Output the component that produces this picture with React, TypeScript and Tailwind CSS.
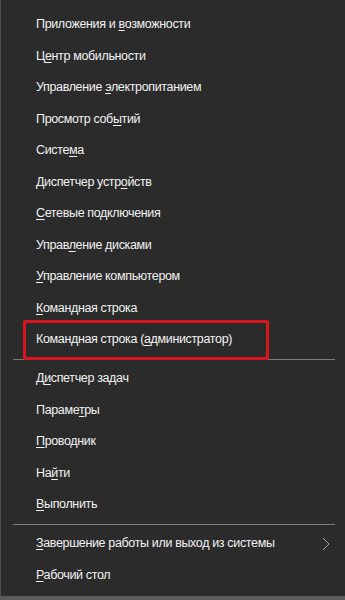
import type { ReactNode } from "react";

type Item = { pre: string; key: string; post: string };

const groupA: Item[] = [
  { pre: "Приложения и ", key: "в", post: "озможности" },
  { pre: "Ц", key: "е", post: "нтр мобильности" },
  { pre: "Управление ", key: "э", post: "лектропитанием" },
  { pre: "Просмотр соб", key: "ы", post: "тий" },
  { pre: "Систе", key: "м", post: "а" },
  { pre: "Диспетчер устр", key: "о", post: "йств" },
  { pre: "", key: "С", post: "етевые подключения" },
  { pre: "Управ", key: "л", post: "ение дисками" },
  { pre: "", key: "У", post: "правление компьютером" },
  { pre: "", key: "К", post: "омандная строка" },
];

const groupB: Item[] = [
  { pre: "Д", key: "и", post: "спетчер задач" },
  { pre: "Параме", key: "т", post: "ры" },
  { pre: "", key: "П", post: "роводник" },
  { pre: "На", key: "й", post: "ти" },
  { pre: "", key: "В", post: "ыполнить" },
];

function Label({ item }: { item: Item }) {
  return (
    <span>
      {item.pre}
      <span className="underline decoration-1 underline-offset-[2px]">{item.key}</span>
      {item.post}
    </span>
  );
}

function Row({ children }: { children: ReactNode }) {
  return (
    <div className="relative flex h-[31.5px] items-center pl-[35px] pr-[10px]">
      {children}
    </div>
  );
}

function Separator() {
  return (
    <div className="flex h-[7.5px] items-center pl-[12px] pr-[10px]">
      <div className="h-px w-full bg-[#7a7a7a]" />
    </div>
  );
}

export default function App() {
  return (
    <div className="flex h-[600px] w-[345px] flex-col bg-[#4e4e4e]">
      <div
        className="flex flex-1 flex-col border-l border-[#505050] bg-[#2b2b2b] pt-[9px] text-[12.5px] tracking-[-0.35px] text-[#f2f2f2]"
        style={{ fontFamily: '"Liberation Sans", Arial, sans-serif' }}
      >
        {groupA.map((it) => (
          <Row key={it.pre + it.key}>
            <Label item={it} />
          </Row>
        ))}
        <Row>
          <span>
            Командная строка (
            <span className="underline decoration-1 underline-offset-[2px]">а</span>
            дминистратор)
          </span>
          <div className="pointer-events-none absolute -top-[4px] -bottom-[4px] left-[22px] w-[246px] rounded-[2px] border-[3px] border-[#d8141c]" />
        </Row>
        <Separator />
        {groupB.map((it) => (
          <Row key={it.pre + it.key}>
            <Label item={it} />
          </Row>
        ))}
        <Separator />
        <Row>
          <span>
            <span className="underline decoration-1 underline-offset-[2px]">З</span>
            авершение работы или выход из системы
          </span>
          <svg
            className="ml-auto mr-[5px]"
            width="8"
            height="14"
            viewBox="0 0 8 14"
            fill="none"
            stroke="#a8a8a8"
            strokeWidth="1"
          >
            <polyline points="1,1 7,7 1,13" />
          </svg>
        </Row>
        <Row>
          <span>
            <span className="underline decoration-1 underline-offset-[2px]">Р</span>
            абочий стол
          </span>
        </Row>
      </div>
      <div className="h-[4px] bg-[#5c5c5c]" />
    </div>
  );
}
